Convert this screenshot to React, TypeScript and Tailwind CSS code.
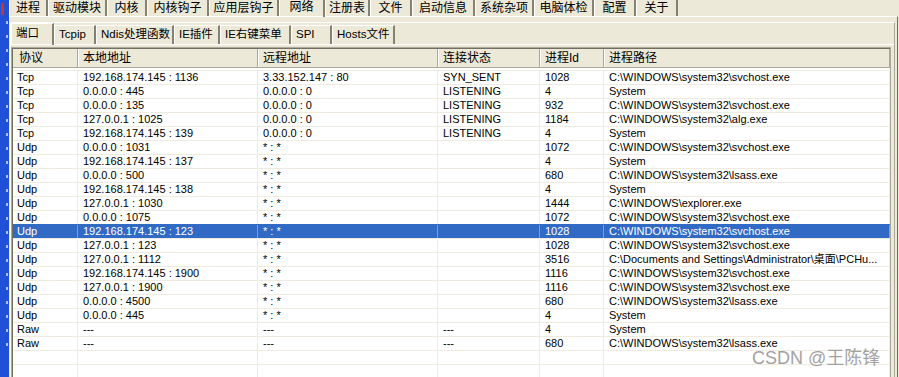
const topTabs = [
  { label: '进程', w: 'w-[39px]' },
  { label: '驱动模块', w: 'w-[59px]' },
  { label: '内核', w: 'w-[40px]' },
  { label: '内核钩子', w: 'w-[62px]' },
  { label: '应用层钩子', w: 'w-[70px]' },
  { label: '网络', w: 'w-[46px]', active: true },
  { label: '注册表', w: 'w-[45px]' },
  { label: '文件', w: 'w-[42px]' },
  { label: '启动信息', w: 'w-[63px]' },
  { label: '系统杂项', w: 'w-[59px]' },
  { label: '电脑体检', w: 'w-[60px]' },
  { label: '配置', w: 'w-[42px]' },
  { label: '关于', w: 'w-[42px]' },
];

const subTabs = [
  { label: '端口', w: 'w-[43px]', active: true },
  { label: 'Tcpip', w: 'w-[42px]' },
  { label: 'Ndis处理函数', w: 'w-[78px]' },
  { label: 'IE插件', w: 'w-[46px]' },
  { label: 'IE右键菜单', w: 'w-[71px]' },
  { label: 'SPI', w: 'w-[41px]' },
  { label: 'Hosts文件', w: 'w-[63px]' },
];

const columns = ['协议', '本地地址', '远程地址', '连接状态', '进程Id', '进程路径'];

const SVC = 'C:\\WINDOWS\\system32\\svchost.exe';
const LSASS = 'C:\\WINDOWS\\system32\\lsass.exe';

const rows: string[][] = [
  ['Tcp', '192.168.174.145 : 1136', '3.33.152.147 : 80', 'SYN_SENT', '1028', SVC],
  ['Tcp', '0.0.0.0 : 445', '0.0.0.0 : 0', 'LISTENING', '4', 'System'],
  ['Tcp', '0.0.0.0 : 135', '0.0.0.0 : 0', 'LISTENING', '932', SVC],
  ['Tcp', '127.0.0.1 : 1025', '0.0.0.0 : 0', 'LISTENING', '1184', 'C:\\WINDOWS\\system32\\alg.exe'],
  ['Tcp', '192.168.174.145 : 139', '0.0.0.0 : 0', 'LISTENING', '4', 'System'],
  ['Udp', '0.0.0.0 : 1031', '* : *', '', '1072', SVC],
  ['Udp', '192.168.174.145 : 137', '* : *', '', '4', 'System'],
  ['Udp', '0.0.0.0 : 500', '* : *', '', '680', LSASS],
  ['Udp', '192.168.174.145 : 138', '* : *', '', '4', 'System'],
  ['Udp', '127.0.0.1 : 1030', '* : *', '', '1444', 'C:\\WINDOWS\\explorer.exe'],
  ['Udp', '0.0.0.0 : 1075', '* : *', '', '1072', SVC],
  ['Udp', '192.168.174.145 : 123', '* : *', '', '1028', SVC],
  ['Udp', '127.0.0.1 : 123', '* : *', '', '1028', SVC],
  ['Udp', '127.0.0.1 : 1112', '* : *', '', '3516', 'C:\\Documents and Settings\\Administrator\\桌面\\PCHu...'],
  ['Udp', '192.168.174.145 : 1900', '* : *', '', '1116', SVC],
  ['Udp', '127.0.0.1 : 1900', '* : *', '', '1116', SVC],
  ['Udp', '0.0.0.0 : 4500', '* : *', '', '680', LSASS],
  ['Udp', '0.0.0.0 : 445', '* : *', '', '4', 'System'],
  ['Raw', '---', '---', '---', '4', 'System'],
  ['Raw', '---', '---', '---', '680', LSASS],
  ['', '', '', '', '', ''],
  ['', '', '', '', '', ''],
];

const SELECTED = 11;
const gridCols = 'grid grid-cols-[65px_180px_180px_102px_64px_1fr]';

export default function App() {
  return (
    <div className="relative flex h-[377px] w-[899px] overflow-hidden bg-[#ECE9D8] font-['Liberation_Sans','Noto_Sans_CJK_SC',sans-serif] text-black">
      {/* desktop behind the window */}
      <div className="flex w-[9px] shrink-0 flex-col bg-[#2150D8]">
        <div className="ml-[1px] mt-[3px] h-[12px] w-[3px] bg-[#C8352A]" />
        {Array.from({ length: 24 }).map((_, i) => (
          <div key={i} className="flex h-[14px] items-center justify-end pr-[1px]">
            <div className="h-[3px] w-[2px] bg-[#AFC0F0]" />
          </div>
        ))}
      </div>

      <div className="flex min-w-0 flex-1 flex-col">
        {/* main tabs */}
        <div className="flex h-[16px]">
          {topTabs.map((t) => (
            <div
              key={t.label}
              className={`${t.w} relative z-10 flex shrink-0 items-center justify-center whitespace-nowrap border-l border-r-2 border-l-white border-r-[#85826F] text-[12px] leading-none ${
                t.active ? 'h-[17px] pb-[3px]' : 'h-[16px]'
              }`}
            >
              {t.label}
            </div>
          ))}
        </div>

        <div className="mr-[1px] flex flex-1 flex-col border-r border-t border-r-[#716F64] border-t-white pt-[5px]">
          <div className="ml-[1px] mr-[2px] flex flex-1 flex-col border-l border-r border-t border-l-white border-r-[#ACA899] border-t-white">
            {/* sub tabs */}
            <div className="flex h-[21px] items-end">
              {subTabs.map((t) => (
                <div
                  key={t.label}
                  className={`${t.w} relative z-10 flex shrink-0 items-center whitespace-nowrap border-l border-r-2 border-t border-l-white border-r-[#85826F] border-t-white pl-[4px] text-[11.5px] leading-none ${
                    t.active ? '-mb-[1px] h-[22px] pb-[2px]' : 'h-[19px]'
                  }`}
                >
                  {t.label}
                </div>
              ))}
            </div>

            <div className="flex flex-1 flex-col border-t border-white pr-[3px] pt-[2px]">
              {/* list view */}
              <div className="flex flex-1 flex-col border border-[#ACA899]">
                <div className="flex flex-1 flex-col border-l border-t border-l-[#716F64] border-t-[#716F64] bg-white">
                  <div className={`${gridCols} h-[19px] border-b border-[#ACA899] bg-[#ECE9D8]`}>
                    {columns.map((c, i) => (
                      <div
                        key={c}
                        className={`flex items-center border-r border-[#ACA899] text-[12px] leading-none ${
                          i === 0 ? 'pl-[6px]' : 'border-l border-l-white pl-[4px]'
                        }`}
                      >
                        {c}
                      </div>
                    ))}
                  </div>

                  <div className="pt-[2px]">
                    {rows.map((r, ri) => {
                      const sel = ri === SELECTED;
                      return (
                        <div
                          key={ri}
                          className={`${gridCols} h-[14px] border-t text-[11px] leading-[13px] ${
                            sel ? 'border-[#316AC5] bg-[#316AC5] text-white' : 'border-[#EFEBDE]'
                          }`}
                        >
                          {r.map((cell, ci) => (
                            <div
                              key={ci}
                              className={`truncate whitespace-nowrap border-r ${
                                sel ? 'border-[#7C9BD8]' : 'border-[#EFEBDE]'
                              } ${ci === 0 ? 'pl-[4px]' : 'pl-[5px]'}`}
                            >
                              {cell}
                            </div>
                          ))}
                        </div>
                      );
                    })}
                  </div>
                </div>
              </div>
            </div>
          </div>
        </div>
      </div>

      {/* blog watermark */}
      <div className="absolute left-[752px] top-[348px] text-[18px] leading-[20px] text-[#A3A3A3]">
        CSDN @王陈锋
      </div>
    </div>
  );
}
